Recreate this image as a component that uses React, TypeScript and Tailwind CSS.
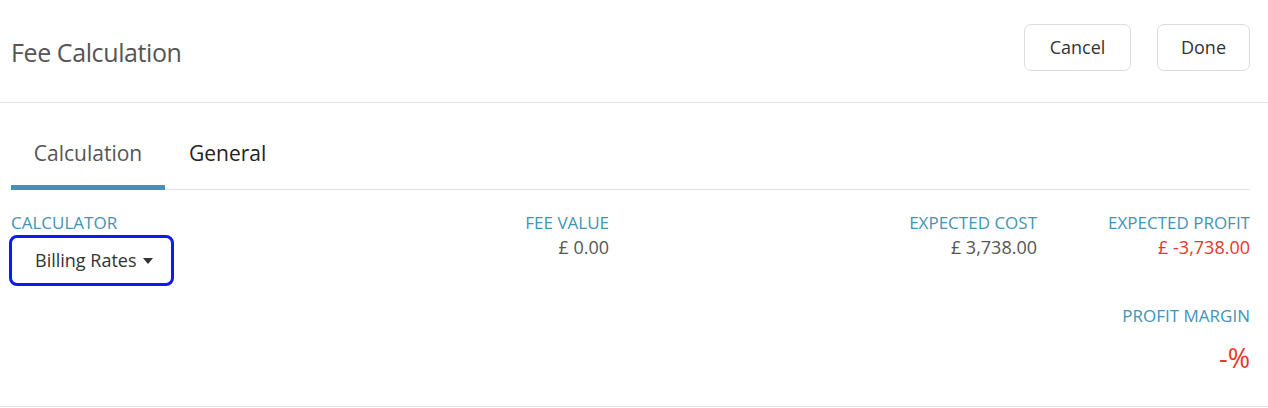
import { useState } from 'react';

const font = { fontFamily: '"Open Sans", "Noto Sans", sans-serif' };

export default function App() {
  const [tab, setTab] = useState('calculation');

  return (
    <div className="w-[1268px] h-[408px] bg-white text-[#444]" style={font}>
      {/* Header */}
      <div className="h-[103px] flex items-start justify-between pl-[11px] pr-[18px] border-b border-[#e6e6e6]">
        <h1 className="mt-[35px] text-[25px] leading-[34px] text-[#555] tracking-[-0.4px]">Fee Calculation</h1>
        <div className="mt-[24px] flex gap-[26px]">
          <button className="h-[47px] w-[107px] rounded-[7px] border border-[#dcdcdc] text-[18px] text-[#333]">
            Cancel
          </button>
          <button className="h-[47px] w-[93px] rounded-[7px] border border-[#dcdcdc] text-[18px] text-[#333]">
            Done
          </button>
        </div>
      </div>

      <div className="pl-[11px] pr-[18px]">
        {/* Tabs */}
        <div className="flex mt-[20px] border-b border-[#e3e3e3]">
          <button
            onClick={() => setTab('calculation')}
            className={`h-[67px] w-[154px] -mb-px text-[21px] border-b-[5px] ${
              tab === 'calculation' ? 'border-[#4593b0] text-[#555]' : 'border-transparent text-[#222]'
            }`}
          >
            Calculation
          </button>
          <button
            onClick={() => setTab('general')}
            className={`h-[67px] -mb-px px-[24px] text-[21px] border-b-[5px] ${
              tab === 'general' ? 'border-[#4593b0] text-[#555]' : 'border-transparent text-[#222]'
            }`}
          >
            General
          </button>
        </div>

        {/* Fields */}
        <div className="flex mt-[22px]">
          <div className="w-[320px]">
            <div className="text-[17px] leading-[22px] text-[#4394b4]">CALCULATOR</div>
            <button className="-ml-[2px] mt-[1px] h-[51px] w-[165px] flex items-center gap-[6px] pl-[23px] rounded-[8px] border-[3px] border-[#0a1bf5] text-[18px] text-[#333]">
              Billing Rates
              <svg width="10" height="6" viewBox="0 0 10 6" className="mt-[1px]">
                <path d="M0 0h10L5 6z" fill="#333" />
              </svg>
            </button>
          </div>

          <div className="w-[278px] text-right">
            <div className="text-[17px] leading-[22px] text-[#4394b4]">FEE VALUE</div>
            <div className="mt-[1px] text-[18px] leading-[24px] text-[#555]">£ 0.00</div>
          </div>

          <div className="w-[428px] text-right">
            <div className="text-[17px] leading-[22px] text-[#4394b4]">EXPECTED COST</div>
            <div className="mt-[1px] text-[18px] leading-[24px] text-[#555]">£ 3,738.00</div>
          </div>

          <div className="flex-1 text-right">
            <div className="text-[17px] leading-[22px] text-[#4394b4]">EXPECTED PROFIT</div>
            <div className="mt-[1px] text-[18px] leading-[24px] text-[#e8362c]">£ -3,738.00</div>

            <div className="mt-[46px] text-[17px] leading-[22px] text-[#4394b4]">PROFIT MARGIN</div>
            <div className="mt-[15px] text-[27px] leading-[32px] font-medium text-[#e8362c]">-%</div>
          </div>
        </div>
      </div>

      <div className="mt-[32px] border-b border-[#e3e3e3]" />
    </div>
  );
}
